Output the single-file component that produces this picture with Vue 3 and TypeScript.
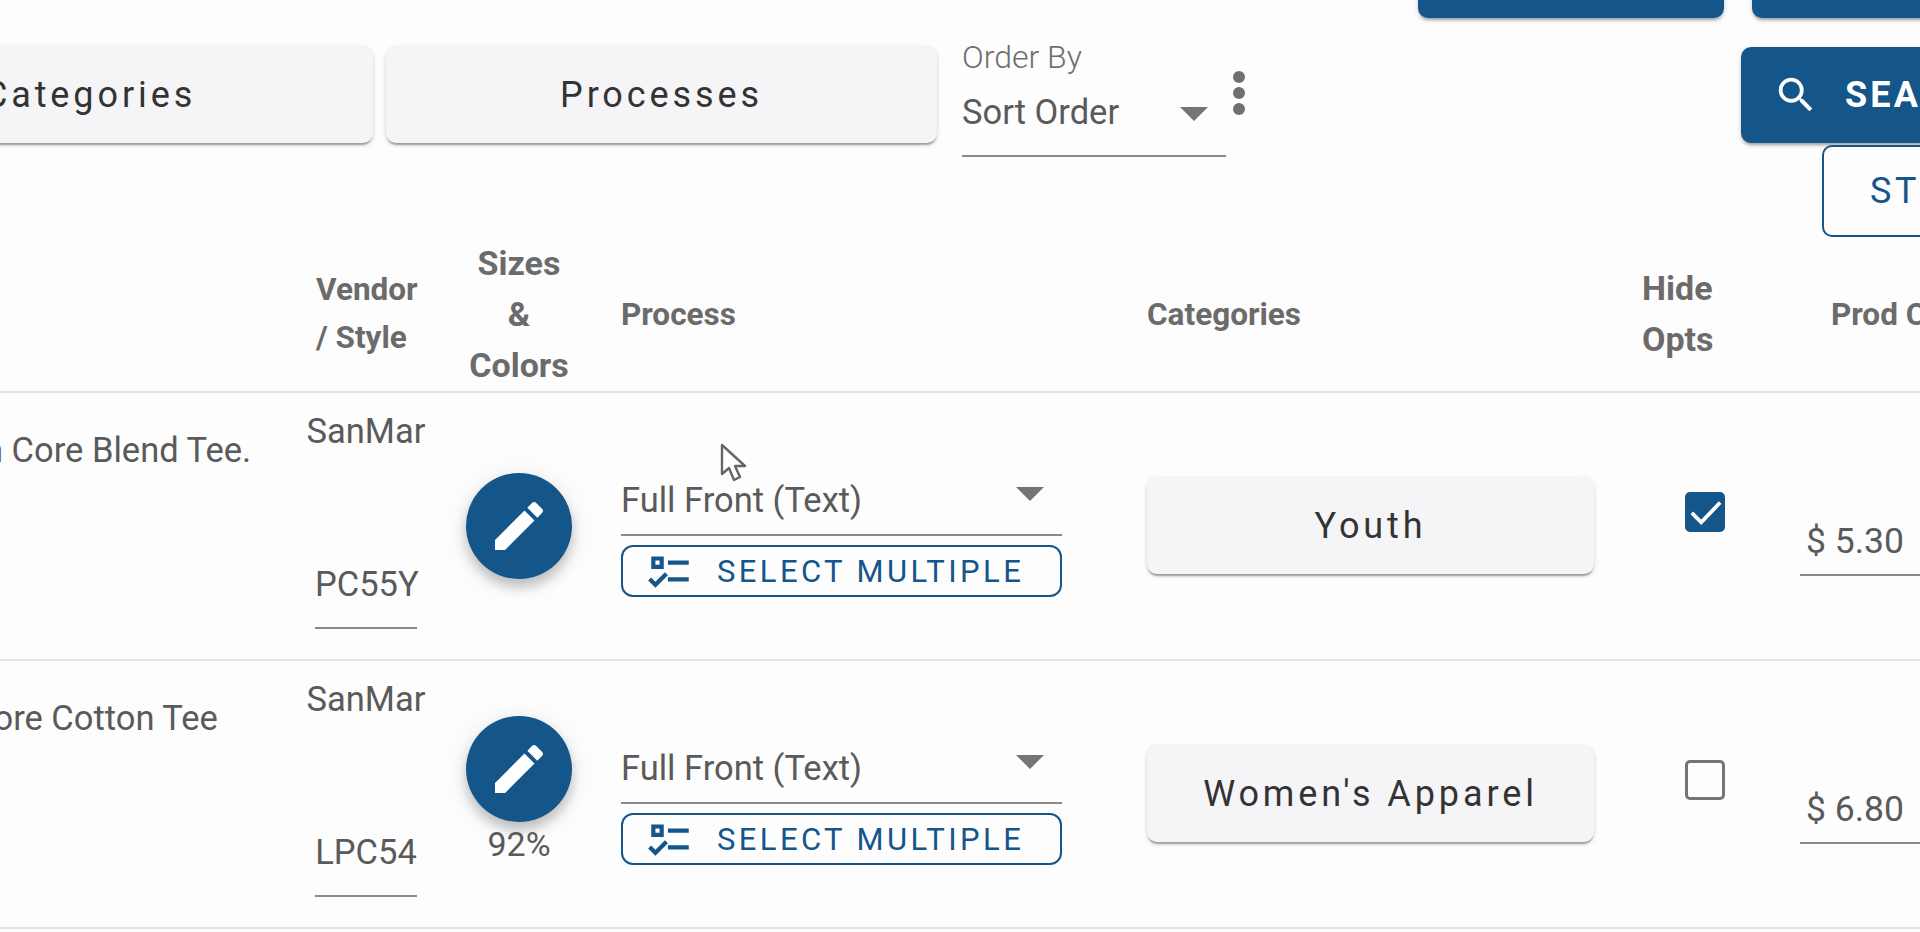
<script setup lang="ts">
interface ProductRow {
  desc: string;
  descOffset: number;
  vendor: string;
  style: string;
  percent: string;
  category: string;
  hideOpts: boolean;
  cost: string;
}

const rows: ProductRow[] = [
  {
    desc: "n Core Blend Tee.",
    descOffset: -16,
    vendor: "SanMar",
    style: "PC55Y",
    percent: "",
    category: "Youth",
    hideOpts: true,
    cost: "$ 5.30",
  },
  {
    desc: "Core Cotton Tee",
    descOffset: -29,
    vendor: "SanMar",
    style: "LPC54",
    percent: "92%",
    category: "Women's Apparel",
    hideOpts: false,
    cost: "$ 6.80",
  },
];
</script>

<template>
  <div class="page">
    <div class="top-actions">
      <button class="top-btn first"></button>
      <button class="top-btn"></button>
    </div>

    <div class="filters">
      <button class="soft-btn filter-btn wide">Categories</button>
      <button class="soft-btn filter-btn">Processes</button>
      <div class="order-by">
        <label>Order By</label>
        <div class="order-value">
          <span>Sort Order</span>
          <i class="arrow"></i>
        </div>
      </div>
      <div class="kebab"><i></i><i></i><i></i></div>
      <button class="search-btn">
        <svg viewBox="0 0 24 24" width="46" height="46">
          <path
            fill="currentColor"
            d="M9.5,3A6.5,6.5 0 0,1 16,9.5C16,11.11 15.41,12.59 14.44,13.73L14.71,14H15.5L20.5,19L19,20.5L14,15.5V14.71L13.73,14.44C12.59,15.41 11.11,16 9.5,16A6.5,6.5 0 0,1 3,9.5A6.5,6.5 0 0,1 9.5,3M9.5,5C7,5 5,7 5,9.5C5,12 7,14 9.5,14C12,14 14,12 14,9.5C14,7 12,5 9.5,5Z"
          />
        </svg>
        SEARCH
      </button>
    </div>

    <div class="style-line">
      <button class="style-btn">STYLE</button>
    </div>

    <div class="grid head">
      <div></div>
      <div class="head-vendor">Vendor<br />/ Style</div>
      <div class="head-sizes">Sizes<br />&amp;<br />Colors</div>
      <div class="head-process">Process</div>
      <div>Categories</div>
      <div class="head-hide">Hide<br />Opts</div>
      <div class="head-prod">Prod Cost</div>
    </div>

    <div v-for="row in rows" :key="row.style" class="grid row">
      <div class="desc">
        <span :style="{ marginLeft: row.descOffset + 'px' }">{{ row.desc }}</span>
      </div>
      <div class="vendor">
        <span>{{ row.vendor }}</span>
        <span class="style-code">{{ row.style }}</span>
      </div>
      <div class="sizes">
        <button class="fab">
          <svg viewBox="0 0 24 24" width="64" height="64">
            <path
              fill="currentColor"
              d="M20.71,7.04C21.1,6.65 21.1,6 20.71,5.63L18.37,3.29C18,2.9 17.35,2.9 16.96,3.29L15.12,5.12L18.87,8.87M3,17.25V21H6.75L17.81,9.93L14.06,6.18L3,17.25Z"
            />
          </svg>
        </button>
        <span v-if="row.percent" class="percent">{{ row.percent }}</span>
      </div>
      <div class="process">
        <div class="process-select">
          <span>Full Front (Text)</span>
          <i class="arrow"></i>
        </div>
        <button class="multi-btn">
          <svg viewBox="0 0 24 24" width="50" height="50">
            <path
              fill="currentColor"
              d="M3,5H9V11H3V5M5,7V9H7V7H5M11,7H21V9H11V7M11,15H21V17H11V15M5,20L1.5,16.5L2.91,15.09L5,17.17L9.59,12.59L11,14L5,20Z"
            />
          </svg>
          SELECT MULTIPLE
        </button>
      </div>
      <div class="category">
        <button class="soft-btn cat-btn">{{ row.category }}</button>
      </div>
      <div class="hide">
        <span class="check" :class="{ on: row.hideOpts }">
          <svg v-if="row.hideOpts" viewBox="3 3 18 18" width="34" height="34">
            <path fill="none" stroke="#fff" stroke-width="2" d="M5 12.5l5 5L20 7" />
          </svg>
        </span>
      </div>
      <div class="prod">
        <div class="cost">{{ row.cost }}</div>
      </div>
    </div>

    <svg class="cursor" viewBox="0 0 28 40" width="28" height="40">
      <path
        d="M2 2v29l7-6 5 12 6-3-5-11h10z"
        fill="#fff"
        stroke="#666"
        stroke-width="2.4"
        stroke-linejoin="round"
      />
    </svg>
  </div>
</template>

<style>
html,
body {
  margin: 0;
  background: #fdfdfd;
  overflow: hidden;
}
</style>

<style scoped>
.page {
  position: relative;
  width: 1920px;
  height: 932px;
  overflow: hidden;
  background: #fdfdfd;
  font-family: Roboto, "Liberation Sans", sans-serif;
  color: #5a5a5a;
}
button {
  font-family: inherit;
  cursor: pointer;
  padding: 0;
}
.top-actions {
  display: flex;
  height: 18px;
  padding-left: 1418px;
  align-items: flex-end;
}
.top-btn {
  flex: none;
  width: 306px;
  height: 60px;
  border: none;
  background: #14558a;
  border-radius: 10px;
  box-shadow: 0 3px 3px -1px rgba(0, 0, 0, 0.3), 0 2px 6px rgba(0, 0, 0, 0.12);
}
.top-btn.first {
  margin-right: 28px;
}
.filters {
  display: flex;
  align-items: flex-start;
  height: 96px;
  margin: 29px 0 0 -193px;
  width: 2300px;
}
.soft-btn {
  border: none;
  background: #f5f5f7;
  color: #333;
  border-radius: 10px;
  font-size: 36px;
  font-weight: 450;
  letter-spacing: 3.9px;
  box-shadow: 0 3px 2px -1px rgba(0, 0, 0, 0.32), 0 2px 5px rgba(0, 0, 0, 0.12),
    0 -1px 4px rgba(0, 0, 0, 0.04);
}
.filter-btn {
  flex: none;
  width: 551px;
  height: 96px;
  margin-right: 13px;
}
.filter-btn.wide {
  width: 566px;
}
.order-by {
  flex: none;
  width: 264px;
  height: 108px;
  margin-left: 12px;
  border-bottom: 2px solid #8a8a8a;
  box-sizing: content-box;
}
.order-by label {
  display: block;
  font-size: 32px;
  font-weight: 300;
  line-height: 30px;
  margin-top: -5px;
  color: #6f6f6f;
}
.order-value {
  display: flex;
  justify-content: space-between;
  align-items: center;
  margin-top: 20px;
  padding-right: 18px;
  font-size: 34.5px;
  line-height: 40px;
}
.order-value .arrow {
  margin-top: 4px;
}
.arrow {
  flex: none;
  width: 0;
  height: 0;
  border-left: 14px solid transparent;
  border-right: 14px solid transparent;
  border-top: 14px solid #757575;
}
.kebab {
  flex: none;
  display: flex;
  flex-direction: column;
  gap: 4px;
  margin: 24px 0 0 7px;
}
.kebab i {
  display: block;
  width: 12px;
  height: 12px;
  border-radius: 50%;
  background: #707070;
}
.search-btn {
  flex: none;
  display: flex;
  align-items: center;
  gap: 26px;
  width: 320px;
  height: 96px;
  margin-left: 496px;
  padding-left: 32px;
  border: none;
  border-radius: 10px;
  background: #14558a;
  color: #fff;
  font-size: 36px;
  font-weight: 700;
  letter-spacing: 3.2px;
  box-shadow: 0 3px 3px -1px rgba(0, 0, 0, 0.3), 0 2px 6px rgba(0, 0, 0, 0.12);
}
.style-line {
  height: 92px;
  margin-top: 2px;
  padding-left: 1822px;
}
.style-btn {
  width: 240px;
  height: 92px;
  background: #fdfdfd;
  border: 2px solid #14558a;
  border-radius: 10px;
  color: #14558a;
  font-size: 36px;
  font-weight: 450;
  letter-spacing: 3.6px;
  text-align: left;
  padding-left: 46px;
}
.grid {
  display: grid;
  grid-template-columns: 300px 132px 174px 541px 447px 206px 200px;
  width: 2000px;
  border-bottom: 2px solid #e4e4e6;
  box-sizing: border-box;
}
.head {
  height: 156px;
  align-items: center;
  font-size: 31.5px;
  font-weight: 700;
  line-height: 51px;
  color: #6b6b6b;
}
.head-vendor {
  padding-left: 16px;
  line-height: 48px;
}
.head-sizes {
  font-size: 34px;
  text-align: center;
}
.head-process {
  padding-left: 15px;
}
.head-hide {
  font-size: 34px;
  padding-left: 48px;
}
.head-prod {
  padding-left: 31px;
  white-space: nowrap;
}
.row {
  height: 268px;
  font-size: 34.5px;
}
.desc {
  display: flex;
  padding-top: 34px;
  line-height: 46px;
  white-space: nowrap;
}
.vendor {
  display: flex;
  flex-direction: column;
  align-items: center;
  justify-content: space-between;
  height: 236px;
  padding-top: 15px;
  box-sizing: border-box;
  line-height: 46px;
  white-space: nowrap;
}
.style-code {
  width: 102px;
  height: 66px;
  text-align: center;
  border-bottom: 2px solid #8a8a8a;
}
.sizes {
  display: flex;
  flex-direction: column;
  align-items: center;
  justify-content: center;
}
.fab {
  flex: none;
  display: flex;
  align-items: center;
  justify-content: center;
  width: 106px;
  height: 106px;
  border: none;
  border-radius: 50%;
  background: #14558a;
  color: #fff;
  box-shadow: 0 8px 12px rgba(0, 0, 0, 0.2), 0 4px 24px rgba(0, 0, 0, 0.1);
}
.percent {
  font-size: 34px;
  line-height: 44px;
  margin-bottom: 6px;
}
.process {
  padding: 0 85px 0 15px;
}
.process-select {
  display: flex;
  justify-content: space-between;
  align-items: center;
  height: 143px;
  box-sizing: border-box;
  padding: 72px 18px 0 0;
  border-bottom: 2px solid #8a8a8a;
  white-space: nowrap;
  line-height: 42px;
}
.process-select .arrow {
  margin-top: -12px;
}
.multi-btn {
  display: flex;
  align-items: center;
  gap: 22px;
  width: 100%;
  height: 52px;
  margin-top: 9px;
  padding-left: 22px;
  background: #fdfdfd;
  border: 2px solid #14558a;
  border-radius: 12px;
  color: #14558a;
  font-size: 31px;
  font-weight: 450;
  letter-spacing: 3.4px;
  white-space: nowrap;
}
.category {
  padding-top: 85px;
}
.cat-btn {
  width: 100%;
  height: 96px;
}
.hide {
  padding: 99px 0 0 91px;
}
.check {
  display: flex;
  align-items: center;
  justify-content: center;
  width: 40px;
  height: 40px;
  box-sizing: border-box;
  border: 3px solid #757575;
  border-radius: 5px;
}
.check.on {
  background: #14558a;
  border-color: #14558a;
}
.prod {
  padding-top: 124px;
}
.cost {
  height: 57px;
  padding-left: 6px;
  font-size: 35.5px;
  line-height: 48px;
  border-bottom: 2px solid #8a8a8a;
}
.cursor {
  position: absolute;
  left: 720px;
  top: 443px;
}
</style>
